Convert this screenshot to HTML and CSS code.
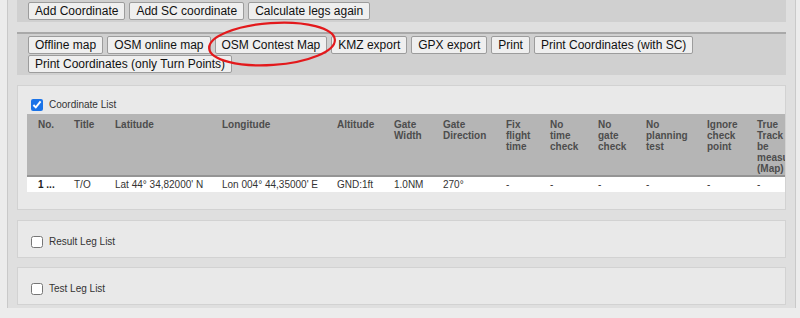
FILE: index.html
```html
<!DOCTYPE html>
<html lang="en">

<head>
  <meta charset="UTF-8">
  <title>Route Coordinates</title>
  <link rel="stylesheet" href="styles.css">
</head>

<body>

  <div class="page">

    <!-- top action bar -->
    <div class="bar bar-top">
      <button class="btn" type="button">Add Coordinate</button>
      <button class="btn" type="button">Add SC coordinate</button>
      <button class="btn" type="button">Calculate legs again</button>
    </div>

    <!-- export bar -->
    <div class="bar bar-export">
      <button class="btn" type="button">Offline map</button>
      <button class="btn" type="button">OSM online map</button>
      <button class="btn" type="button">OSM Contest Map</button>
      <button class="btn" type="button">KMZ export</button>
      <button class="btn" type="button">GPX export</button>
      <button class="btn" type="button">Print</button>
      <button class="btn" type="button">Print Coordinates (with SC)</button>
      <button class="btn" type="button">Print Coordinates (only Turn Points)</button>
    </div>

    <!-- coordinate list -->
    <div class="panel panel-list">
      <label class="toggle"><input type="checkbox" checked> Coordinate List</label>
      <div class="table-wrap">
        <table class="coords">
          <colgroup>
            <col style="width:36px">
            <col style="width:41px">
            <col style="width:107px">
            <col style="width:115px">
            <col style="width:57px">
            <col style="width:49px">
            <col style="width:63px">
            <col style="width:44px">
            <col style="width:48px">
            <col style="width:48px">
            <col style="width:61px">
            <col style="width:50px">
            <col style="width:46px">
          </colgroup>
          <thead>
            <tr>
              <th>No.</th>
              <th>Title</th>
              <th>Latitude</th>
              <th>Longitude</th>
              <th>Altitude</th>
              <th>Gate Width</th>
              <th>Gate Direction</th>
              <th>Fix flight time</th>
              <th>No time check</th>
              <th>No gate check</th>
              <th>No planning test</th>
              <th>Ignore check point</th>
              <th>True Track be measured (Map)</th>
            </tr>
          </thead>
          <tbody>
            <tr>
              <td class="num">1 ...</td>
              <td>T/O</td>
              <td>Lat 44° 34,82000' N</td>
              <td>Lon 004° 44,35000' E</td>
              <td>GND:1ft</td>
              <td>1.0NM</td>
              <td>270°</td>
              <td>-</td>
              <td>-</td>
              <td>-</td>
              <td>-</td>
              <td>-</td>
              <td>-</td>
            </tr>
          </tbody>
        </table>
      </div>
    </div>

    <div class="panel panel-small">
      <label class="toggle"><input type="checkbox"> Result Leg List</label>
    </div>

    <div class="panel panel-small">
      <label class="toggle"><input type="checkbox"> Test Leg List</label>
    </div>

  </div>

  <!-- red marker drawn around the contest map button -->
  <svg class="marker" width="150" height="56" viewBox="0 0 150 56">
    <ellipse cx="75" cy="28" rx="63" ry="21" transform="rotate(-4 75 28)" fill="none" stroke="#e3191c" stroke-width="2.2" />
  </svg>

</body>

</html>
```

FILE: styles.css
```css
body {
  margin: 0;
  background-color: #ececec;
  font-family: "Liberation Sans", Arial, sans-serif;
  color: #222;
}

.page {
  position: relative;
  width: 769px;
  margin-left: 7px;
  padding: 0 9px 3px 9px;
  background-color: #dfdfdf;
  border-left: 1px solid #c9c9c9;
  border-right: 1px solid #c9c9c9;
}

/* button bars */
.bar {
  display: flex;
  flex-wrap: wrap;
  gap: 1px 4px;
  background-color: #d0d0d0;
  padding: 2px 10px 2px 11px;
}

.bar-export {
  margin-top: 10px;
  border-top: 2px solid #a9a9a9;
}

.btn {
  height: 18px;
  padding: 0 6px;
  font-family: "Liberation Sans", Arial, sans-serif;
  font-size: 12px;
  color: #111;
  background-color: #efefef;
  border: 1px solid #9c9c9c;
  border-radius: 2px;
  line-height: 16px;
}

/* collapsible panels */
.panel {
  margin-top: 10px;
  background-color: #e9e9e9;
  border: 1px solid #d2d2d2;
}

.panel-list {
  padding: 12px 0 17px 9px;
}

.table-wrap {
  overflow: hidden;
}

.panel-small {
  height: 38px;
  padding: 14px 0 0 9px;
  box-sizing: border-box;
}

.panel-small + .panel-small {
  margin-top: 9px;
}

.toggle {
  display: flex;
  align-items: center;
  height: 13px;
  font-size: 10px;
  color: #333;
}

.toggle input {
  width: 12px;
  height: 12px;
  margin: 0 6px 0 4px;
  accent-color: #1a73e8;
}

.panel-small .toggle input {
  accent-color: #fff;
}

/* coordinate table */
.coords {
  margin-top: 3px;
  width: 765px;
  table-layout: fixed;
  border-collapse: collapse;
  font-size: 10px;
}

.coords th {
  background-color: #b5b5b5;
  color: #4d4d4d;
  font-weight: bold;
  text-align: left;
  vertical-align: top;
  line-height: 11px;
  padding: 5px 4px 1px 11px;
  border-bottom: 2px solid #949494;
}

.coords td {
  background-color: #fff;
  color: #333;
  height: 15px;
  padding: 0 0 0 11px;
  white-space: nowrap;
  overflow: hidden;
}

.coords td.num {
  font-weight: bold;
  color: #222;
}

.marker {
  position: absolute;
  left: 197px;
  top: 16px;
  pointer-events: none;
}
```
